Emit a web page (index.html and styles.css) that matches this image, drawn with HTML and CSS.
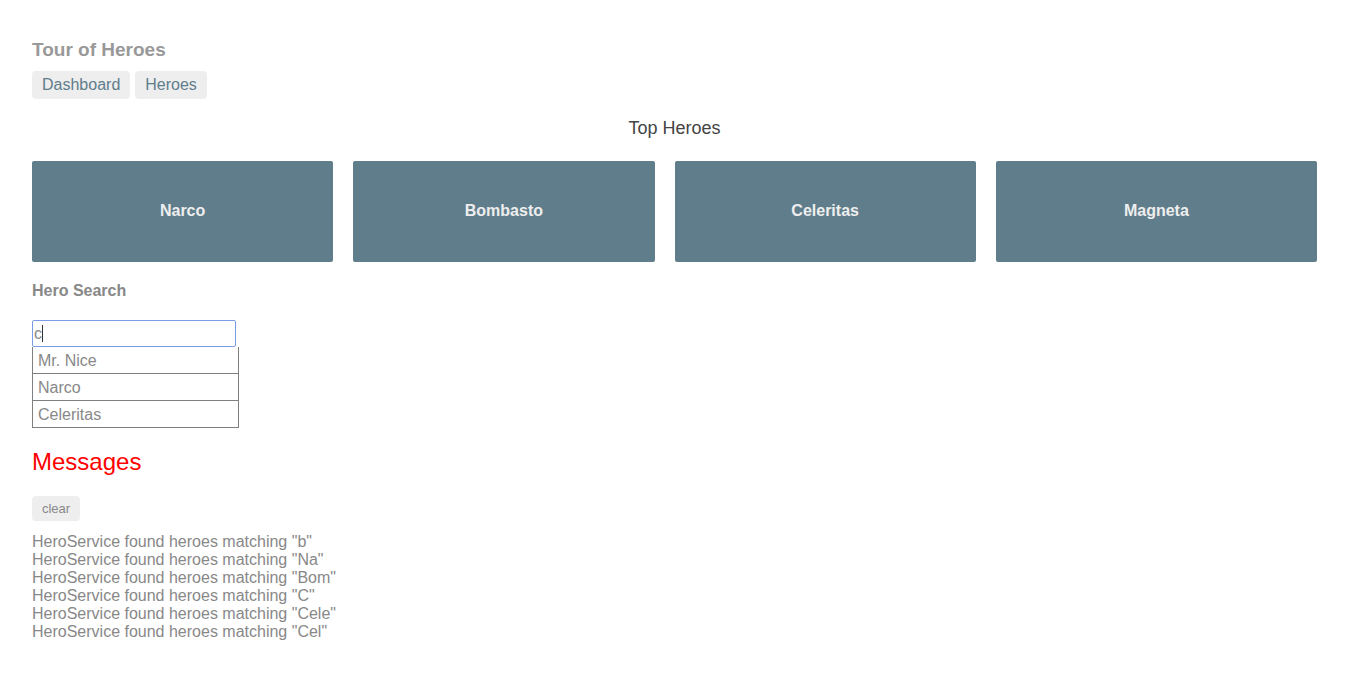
FILE: index.html
```html
<!DOCTYPE html>
<html>
<head>
<meta charset="utf-8">
<title>Tour of Heroes</title>
<link rel="stylesheet" href="styles.css">
</head>
<body>
<div class="app">
  <h1 class="title">Tour of Heroes</h1>
  <nav class="nav">
    <a class="nav-link">Dashboard</a>
    <a class="nav-link">Heroes</a>
  </nav>

  <h3 class="top-title">Top Heroes</h3>
  <div class="grid">
    <div class="col"><div class="module">Narco</div></div>
    <div class="col"><div class="module">Bombasto</div></div>
    <div class="col"><div class="module">Celeritas</div></div>
    <div class="col"><div class="module">Magneta</div></div>
  </div>

  <div class="search">
    <h4 class="search-title">Hero Search</h4>
    <div class="search-box">c<span class="caret"></span></div>
    <ul class="results">
      <li class="result">Mr. Nice</li>
      <li class="result">Narco</li>
      <li class="result">Celeritas</li>
    </ul>
  </div>

  <div class="messages">
    <h2 class="messages-title">Messages</h2>
    <button class="clear">clear</button>
    <div class="msg">HeroService found heroes matching "b"</div>
    <div class="msg">HeroService found heroes matching "Na"</div>
    <div class="msg">HeroService found heroes matching "Bom"</div>
    <div class="msg">HeroService found heroes matching "C"</div>
    <div class="msg">HeroService found heroes matching "Cele"</div>
    <div class="msg">HeroService found heroes matching "Cel"</div>
  </div>
</div>
</body>
</html>
```

FILE: styles.css
```css
html, body {
  margin: 0;
  padding: 0;
  background: #fff;
}

body {
  font-family: "Liberation Sans", Arial, sans-serif;
  font-size: 16px;
  color: #888;
}

.app {
  width: 1285px;
  padding: 39px 0 0 32px;
}

.title {
  margin: 0;
  font-size: 19px;
  font-weight: bold;
  color: #999;
  line-height: 22px;
}

.nav {
  display: flex;
  gap: 5px;
  margin-top: 10px;
}

.nav-link {
  display: block;
  padding: 5px 10px;
  background: #eee;
  border-radius: 4px;
  color: #607d8b;
  font-size: 16px;
  line-height: 18px;
}

.top-title {
  margin: 19px 0 0 0;
  text-align: center;
  font-size: 18px;
  font-weight: normal;
  color: #444;
  line-height: 21px;
}

.grid {
  display: flex;
  margin-top: 22px;
}

.col {
  flex: 0 0 25%;
  box-sizing: border-box;
  padding-right: 20px;
}

.col:last-child {
  padding-right: 0;
}

.module {
  box-sizing: border-box;
  height: 101px;
  padding-bottom: 2px;
  display: flex;
  align-items: center;
  justify-content: center;
  background: #607d8b;
  border-radius: 2px;
  color: #eee;
  font-weight: bold;
  font-size: 16px;
}

.search {
  margin-top: 20px;
}

.search-title {
  margin: 0;
  font-size: 16px;
  font-weight: bold;
  color: #888;
  line-height: 18px;
}

.search-box {
  box-sizing: border-box;
  width: 204px;
  height: 27px;
  margin-top: 20px;
  border: 1px solid #7a9ce8;
  border-radius: 2px;
  padding: 0 1px;
  font-size: 16px;
  line-height: 25px;
  color: #888;
  display: flex;
  align-items: center;
}

.caret {
  display: inline-block;
  width: 1px;
  height: 17px;
  background: #333;
}

.results {
  margin: 0;
  padding: 0;
  list-style: none;
}

.result {
  box-sizing: border-box;
  width: 207px;
  height: 27px;
  padding: 1px 5px 0 5px;
  border-left: 1px solid #808080;
  border-right: 1px solid #808080;
  border-bottom: 1px solid #808080;
  font-size: 16px;
  line-height: 25px;
  color: #888;
}

.messages {
  margin-top: 20px;
}

.messages-title {
  margin: 0;
  font-size: 24px;
  font-weight: normal;
  color: red;
  line-height: 28px;
}

.clear {
  display: block;
  margin-top: 20px;
  width: 48px;
  height: 25px;
  padding: 0;
  border: none;
  border-radius: 4px;
  background: #eee;
  color: #888;
  font-family: "Liberation Sans", Arial, sans-serif;
  font-size: 13px;
}

.clear + .msg {
  margin-top: 12px;
}

.msg {
  font-size: 16px;
  line-height: 18px;
  color: #888;
}
```
